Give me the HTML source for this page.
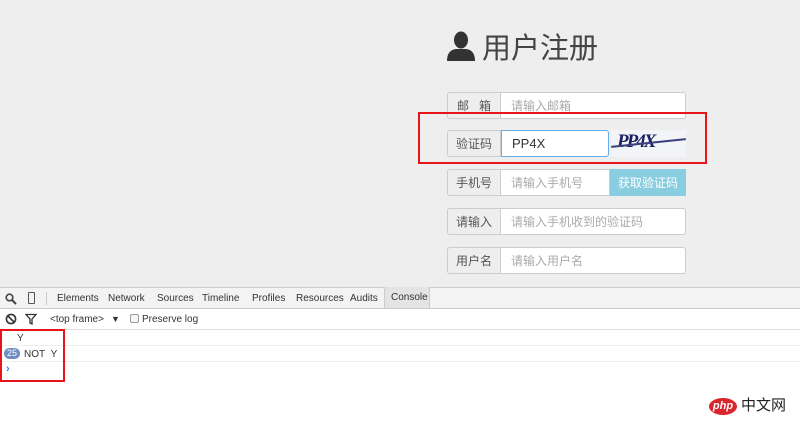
<!DOCTYPE html>
<html><head><meta charset="utf-8"><style>
*{margin:0;padding:0;box-sizing:border-box}
body{width:800px;height:428px;overflow:hidden;background:#fff;font-family:"Liberation Sans","Noto Sans CJK SC",sans-serif;position:relative}
.top{position:absolute;left:0;top:0;width:800px;height:287px;background:#eeeeee}
.title{position:absolute;left:446px;top:30px;font-size:29px;color:#444;line-height:38px}
.row{position:absolute;left:447px;width:239px;height:27px;display:flex;font-size:12px}
.lab{width:54px;background:#eee;border:1px solid #ccc;border-radius:3px 0 0 3px;color:#555;display:flex;align-items:center;justify-content:center}
.inp{flex:1;background:#fff;border:1px solid #ccc;border-left:none;border-radius:0 3px 3px 0;color:#aaa;padding-left:10px;display:flex;align-items:center}
.red{position:absolute;border:2px solid #e8141a}
.tb{position:absolute;left:0;width:800px;font-size:10px;color:#333}
.tb span{white-space:nowrap}
</style></head><body>
<div class="top"></div>
<div class="title"><svg width="30" height="30" viewBox="0 0 30 30" style="vertical-align:-3px;margin-right:6px"><ellipse cx="15" cy="9" rx="7" ry="8.5" fill="#333"/><path d="M1 30 Q1 19 10 18 L20 18 Q29 19 29 30Z" fill="#333"/></svg>用户注册</div>
<div class="row" style="top:92px"><div class="lab">邮&nbsp;&nbsp;&nbsp;箱</div><div class="inp">请输入邮箱</div></div>
<div class="row" style="top:130px"><div class="lab">验证码</div><div class="inp" style="flex:none;width:108px;border:1px solid #66afe9;color:#333;font-size:13px">PP4X</div>
<div style="margin-left:2px;width:75px;height:27px;background:#f2f4f8;position:relative;overflow:hidden"><div style="position:absolute;left:6px;top:1px;font:italic bold 19px 'Liberation Serif',serif;color:#1a2060;letter-spacing:-2px">PP4X</div><div style="position:absolute;left:0;top:12px;width:75px;height:2px;background:#3a3f80;transform:rotate(-6deg)"></div></div></div>
<div class="row" style="top:169px"><div class="lab">手机号</div><div class="inp" style="border-radius:0;flex:none;width:109px">请输入手机号</div><div style="width:76px;background:#88cde0;color:#fff;display:flex;align-items:center;justify-content:center">获取验证码</div></div>
<div class="row" style="top:208px"><div class="lab">请输入</div><div class="inp">请输入手机收到的验证码</div></div>
<div class="row" style="top:247px"><div class="lab">用户名</div><div class="inp">请输入用户名</div></div>
<div class="red" style="left:418px;top:112px;width:289px;height:52px"></div>

<div class="tb" style="top:287px;height:22px;background:#f3f3f3;border-top:1px solid #ccc;border-bottom:1px solid #ccc">
<svg style="position:absolute;left:5px;top:5px" width="12" height="12" viewBox="0 0 12 12"><circle cx="4.5" cy="4.5" r="3.3" fill="none" stroke="#444" stroke-width="1.6"/><path d="M7 7L11 11" stroke="#444" stroke-width="2"/></svg>
<div style="position:absolute;left:28px;top:4px;width:7px;height:12px;border:1.5px solid #555;border-radius:1px"></div>
<div style="position:absolute;left:46px;top:4px;width:1px;height:13px;background:#ccc"></div>
<span style="position:absolute;left:57px;top:5px">Elements</span>
<span style="position:absolute;left:108px;top:5px">Network</span>
<span style="position:absolute;left:157px;top:5px">Sources</span>
<span style="position:absolute;left:202px;top:5px">Timeline</span>
<span style="position:absolute;left:252px;top:5px">Profiles</span>
<span style="position:absolute;left:296px;top:5px">Resources</span>
<span style="position:absolute;left:350px;top:5px">Audits</span>
<span style="position:absolute;left:384px;top:-1px;height:21px;width:46px;background:#e4e4e4;border-left:1px solid #ccc;border-right:1px solid #ccc;padding:5px 0 0 6px">Console</span>
</div>
<div class="tb" style="top:309px;height:21px;border-bottom:1px solid #ddd">
<svg style="position:absolute;left:5px;top:4px" width="12" height="12" viewBox="0 0 12 12"><circle cx="6" cy="6" r="4.6" fill="none" stroke="#333" stroke-width="1.6"/><path d="M3 3L9 9" stroke="#333" stroke-width="1.6"/></svg>
<svg style="position:absolute;left:25px;top:4px" width="12" height="12" viewBox="0 0 12 12"><path d="M1 1.5H11L7 6V11L5 10V6Z" fill="none" stroke="#333" stroke-width="1.3"/></svg>
<span style="position:absolute;left:50px;top:5px">&lt;top frame&gt;</span>
<span style="position:absolute;left:111px;top:5px;font-size:9px">▼</span>
<div style="position:absolute;left:130px;top:5px;width:9px;height:9px;border:1px solid #999;border-radius:2px;background:#f6f6f6"></div>
<span style="position:absolute;left:142px;top:5px">Preserve log</span>
</div>
<div class="tb" style="top:330px;height:16px;border-bottom:1px solid #eee"><span style="position:absolute;left:17px;top:3px;font-size:10px">Y</span></div>
<div class="tb" style="top:346px;height:16px;border-bottom:1px solid #eee">
<span style="position:absolute;left:4px;top:2px;width:16px;height:11px;border-radius:6px;background:#6f8fc0;color:#fff;font-size:9px;text-align:center;line-height:11px">25</span>
<span style="position:absolute;left:24px;top:3px;font-size:10px">NOT&nbsp;&nbsp;Y</span></div>
<span style="position:absolute;left:6px;top:363px;color:#367cf1;font-size:11px;font-weight:bold">›</span>
<div class="red" style="left:0;top:329px;width:65px;height:53px"></div>

<div style="position:absolute;left:709px;top:398px;width:28px;height:17px;border-radius:50%;background:#d9262c;color:#fff;font:italic bold 11px 'Liberation Sans',sans-serif;text-align:center;line-height:16px">php</div>
<div style="position:absolute;left:741px;top:396px;font-size:15px;color:#222;line-height:20px">中文网</div>
</body></html>
